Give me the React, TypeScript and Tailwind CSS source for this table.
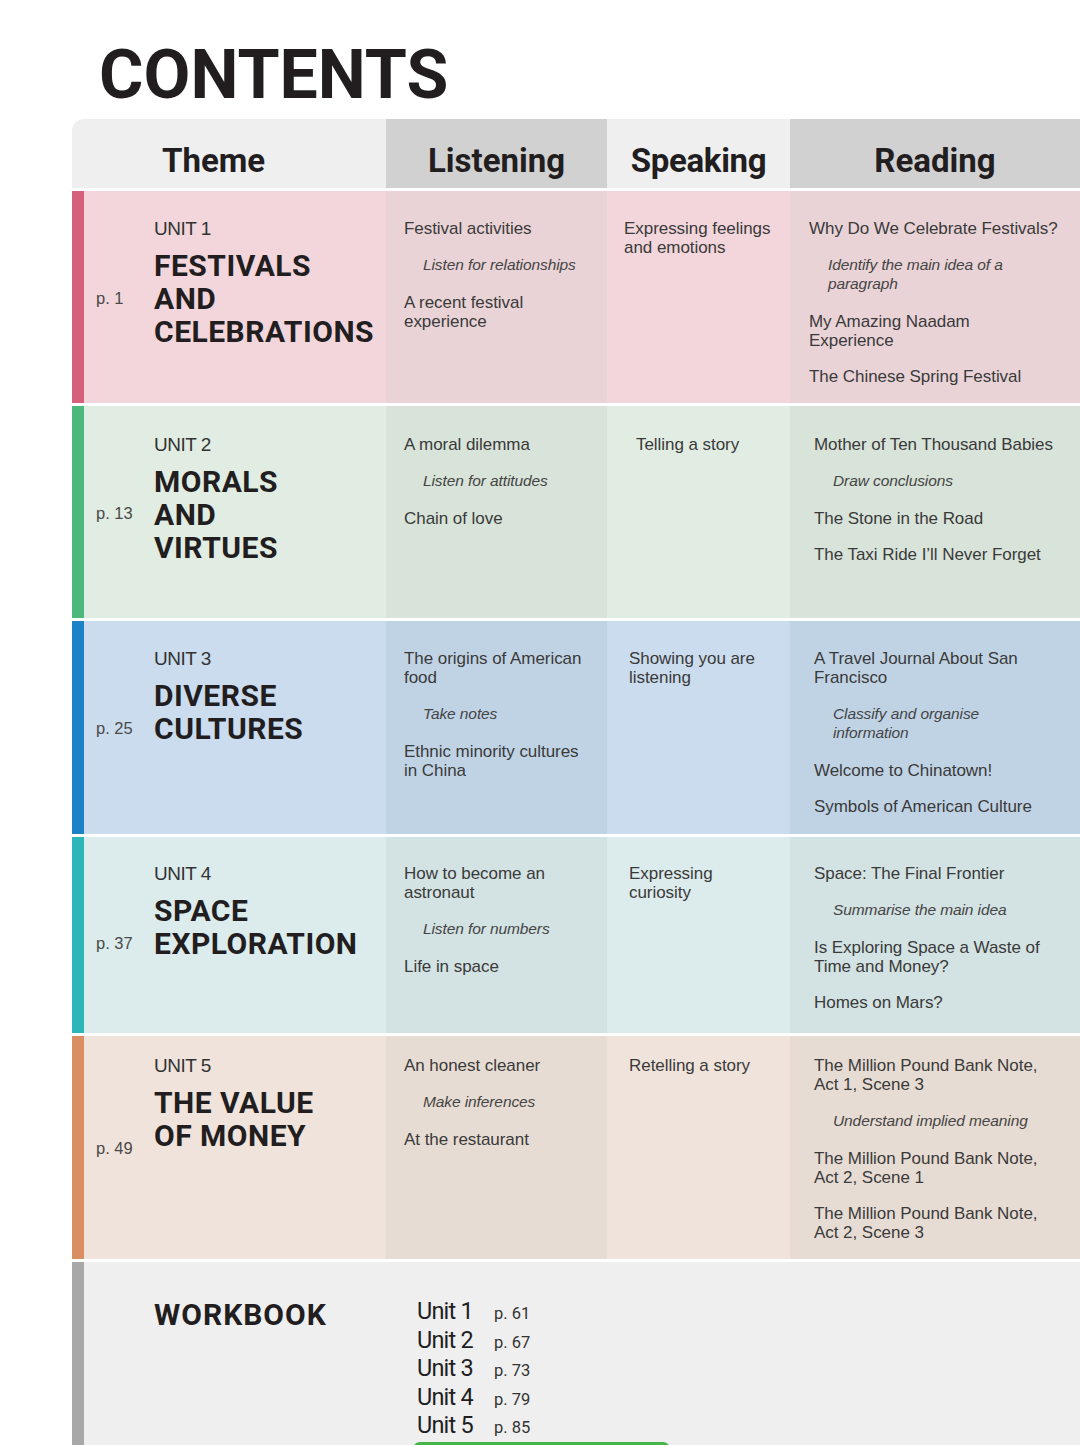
import React from "react";

type Item = { lines: string[]; italic?: boolean };

type Unit = {
  unit: string;
  title: string[];
  page: string;
  h: string;
  pt: string;
  pagePt: string;
  light: string;
  dark: string;
  bar: string;
  spPl: string;
  rdPl: string;
  listening: Item[];
  speaking: Item[];
  reading: Item[];
};

const units: Unit[] = [
  {
    unit: "UNIT 1",
    title: ["FESTIVALS", "AND", "CELEBRATIONS"],
    page: "p. 1",
    h: "h-[212px]",
    pt: "pt-[28px]",
    pagePt: "pt-[98px]",
    light: "bg-[#f2d6db]",
    dark: "bg-[#e9d3d6]",
    bar: "bg-[#d4607c]",
    spPl: "pl-[17px]",
    rdPl: "pl-[19px]",
    listening: [
      { lines: ["Festival activities"] },
      { lines: ["Listen for relationships"], italic: true },
      { lines: ["A recent festival", "experience"] },
    ],
    speaking: [{ lines: ["Expressing feelings", "and emotions"] }],
    reading: [
      { lines: ["Why Do We Celebrate Festivals?"] },
      { lines: ["Identify the main idea of a", "paragraph"], italic: true },
      { lines: ["My Amazing Naadam", "Experience"] },
      { lines: ["The Chinese Spring Festival"] },
    ],
  },
  {
    unit: "UNIT 2",
    title: ["MORALS", "AND", "VIRTUES"],
    page: "p. 13",
    h: "h-[212px]",
    pt: "pt-[29px]",
    pagePt: "pt-[98px]",
    light: "bg-[#e1ece2]",
    dark: "bg-[#d8e3d9]",
    bar: "bg-[#4db87b]",
    spPl: "pl-[29px]",
    rdPl: "pl-[24px]",
    listening: [
      { lines: ["A moral dilemma"] },
      { lines: ["Listen for attitudes"], italic: true },
      { lines: ["Chain of love"] },
    ],
    speaking: [{ lines: ["Telling a story"] }],
    reading: [
      { lines: ["Mother of Ten Thousand Babies"] },
      { lines: ["Draw conclusions"], italic: true },
      { lines: ["The Stone in the Road"] },
      { lines: ["The Taxi Ride I\u2019ll Never Forget"] },
    ],
  },
  {
    unit: "UNIT 3",
    title: ["DIVERSE", "CULTURES"],
    page: "p. 25",
    h: "h-[213px]",
    pt: "pt-[28px]",
    pagePt: "pt-[98px]",
    light: "bg-[#cadced]",
    dark: "bg-[#c0d3e5]",
    bar: "bg-[#1b82c8]",
    spPl: "pl-[22px]",
    rdPl: "pl-[24px]",
    listening: [
      { lines: ["The origins of American", "food"] },
      { lines: ["Take notes"], italic: true },
      { lines: ["Ethnic minority cultures", "in China"] },
    ],
    speaking: [{ lines: ["Showing you are", "listening"] }],
    reading: [
      { lines: ["A Travel Journal About San", "Francisco"] },
      { lines: ["Classify and organise", "information"], italic: true },
      { lines: ["Welcome to Chinatown!"] },
      { lines: ["Symbols of American Culture"] },
    ],
  },
  {
    unit: "UNIT 4",
    title: ["SPACE", "EXPLORATION"],
    page: "p. 37",
    h: "h-[196px]",
    pt: "pt-[27px]",
    pagePt: "pt-[97px]",
    light: "bg-[#dcebeb]",
    dark: "bg-[#d3e2e2]",
    bar: "bg-[#2bb7b7]",
    spPl: "pl-[22px]",
    rdPl: "pl-[24px]",
    listening: [
      { lines: ["How to become an", "astronaut"] },
      { lines: ["Listen for numbers"], italic: true },
      { lines: ["Life in space"] },
    ],
    speaking: [{ lines: ["Expressing", "curiosity"] }],
    reading: [
      { lines: ["Space: The Final Frontier"] },
      { lines: ["Summarise the main idea"], italic: true },
      { lines: ["Is Exploring Space a Waste of", "Time and Money?"] },
      { lines: ["Homes on Mars?"] },
    ],
  },
  {
    unit: "UNIT 5",
    title: ["THE VALUE", "OF MONEY"],
    page: "p. 49",
    h: "h-[223px]",
    pt: "pt-[20px]",
    pagePt: "pt-[103px]",
    light: "bg-[#f0e3dc]",
    dark: "bg-[#e7dcd3]",
    bar: "bg-[#da8f63]",
    spPl: "pl-[22px]",
    rdPl: "pl-[24px]",
    listening: [
      { lines: ["An honest cleaner"] },
      { lines: ["Make inferences"], italic: true },
      { lines: ["At the restaurant"] },
    ],
    speaking: [{ lines: ["Retelling a story"] }],
    reading: [
      { lines: ["The Million Pound Bank Note,", "Act 1, Scene 3"] },
      { lines: ["Understand implied meaning"], italic: true },
      { lines: ["The Million Pound Bank Note,", "Act 2, Scene 1"] },
      { lines: ["The Million Pound Bank Note,", "Act 2, Scene 3"] },
    ],
  },
];

function ItemList({ items }: { items: Item[] }) {
  return (
    <div className="flex flex-col gap-[17px]">
      {items.map((it, i) => (
        <div
          key={i}
          className={
            it.italic
              ? "pl-[19px] pb-[2px] italic text-[15.5px] leading-[19px] text-[#454545] tracking-[-0.1px]"
              : "text-[17px] leading-[19px] text-[#3a3a3a] tracking-[-0.05px]"
          }
        >
          {it.lines.map((l, j) => (
            <div key={j} className="whitespace-nowrap">
              {l}
            </div>
          ))}
        </div>
      ))}
    </div>
  );
}

const din = "font-['Roboto',sans-serif]";
const body = "font-['Liberation_Sans','Arial',sans-serif]";

function UnitRow({ u }: { u: Unit }) {
  return (
    <div className={`grid grid-cols-[314px_221px_183px_1fr] ${u.h}`}>
      <div className={`flex ${u.light}`}>
        <div className={`w-[12px] ${u.bar}`} />
        <div className={`w-[70px] pl-[12px] ${u.pagePt} ${body} text-[16.5px] leading-[18px] text-[#4a4a4a]`}>
          {u.page}
        </div>
        <div className={`${u.pt} flex flex-col`}>
          <div className={`${body} text-[19px] leading-[19px] text-[#333] tracking-[-0.5px]`}>
            {u.unit}
          </div>
          <div className={`mt-[11px] ${din} font-bold text-[30px] leading-[33px] text-[#221e1f] tracking-[0.5px]`}>
            {u.title.map((t, i) => (
              <div key={i} className="whitespace-nowrap">
                {t}
              </div>
            ))}
          </div>
        </div>
      </div>
      <div className={`${u.dark} pl-[18px] ${u.pt} ${body}`}>
        <ItemList items={u.listening} />
      </div>
      <div className={`${u.light} ${u.spPl} ${u.pt} ${body}`}>
        <ItemList items={u.speaking} />
      </div>
      <div className={`${u.dark} ${u.rdPl} ${u.pt} ${body}`}>
        <ItemList items={u.reading} />
      </div>
    </div>
  );
}

export default function App() {
  const wb = [
    ["Unit 1", "p. 61"],
    ["Unit 2", "p. 67"],
    ["Unit 3", "p. 73"],
    ["Unit 4", "p. 79"],
    ["Unit 5", "p. 85"],
  ];
  return (
    <div className="w-[1080px] h-[1445px] overflow-hidden bg-white">
      <div className={`pt-[41px] pl-[99px] ${din} font-bold text-[68px] leading-[68px] text-[#221e1f]`}>
        CONTENTS
      </div>
      <div className="mt-[10px] ml-[72px] flex flex-col gap-[3px]">
        <div className={`grid grid-cols-[314px_221px_183px_1fr] h-[69px] ${din} font-bold text-[33px] leading-[36px] text-[#221e1f]`}>
          <div className="bg-[#efefef] rounded-tl-[12px] pl-[90px] pt-[24px]">Theme</div>
          <div className="bg-[#d1d1d1] pt-[24px] text-center">Listening</div>
          <div className="bg-[#efefef] pt-[24px] text-center tracking-[-0.3px]">Speaking</div>
          <div className="bg-[#d1d1d1] pt-[24px] text-center">Reading</div>
        </div>
        {units.map((u, i) => (
          <UnitRow key={i} u={u} />
        ))}
        <div className="flex bg-[#efefef] h-[200px]">
          <div className="w-[12px] bg-[#a8a8a8]" />
          <div className="w-[70px]" />
          <div className={`w-[263px] pt-[38px] ${din} font-bold text-[30px] leading-[30px] text-[#221e1f] tracking-[1px]`}>
            WORKBOOK
          </div>
          <div className="pt-[35px] flex flex-col">
            {wb.map(([a, b], i) => (
              <div key={i} className="flex items-baseline h-[28.5px]">
                <div className={`w-[77px] ${din} font-normal text-[23.5px] leading-[28px] text-[#221e1f] tracking-[-0.8px]`}>
                  {a}
                </div>
                <div className={`${din} text-[16.5px] leading-[28px] text-[#333]`}>{b}</div>
              </div>
            ))}
            <div className="mt-[2px] -ml-[4px] w-[257px] h-[12px] rounded-t-[7px] bg-[#45b549]" />
          </div>
        </div>
      </div>
    </div>
  );
}
